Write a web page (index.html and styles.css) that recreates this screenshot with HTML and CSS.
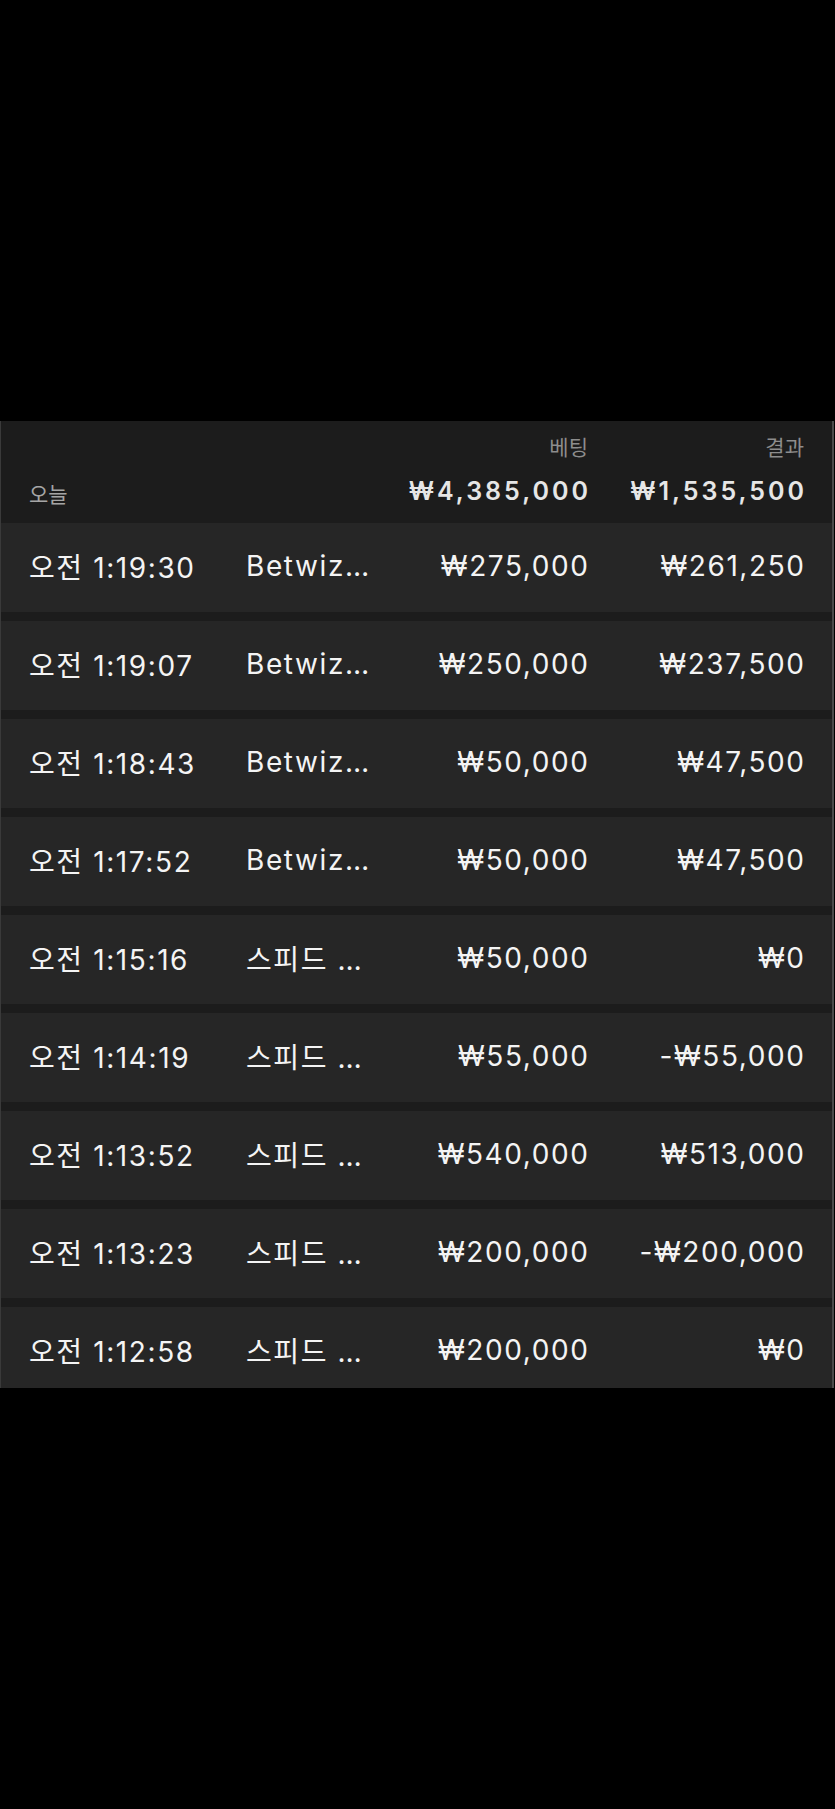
FILE: index.html
```html
<!DOCTYPE html>
<html lang="ko">
<head>
<meta charset="utf-8">
<link rel="stylesheet" href="styles.css">
</head>
<body>
<div class="top-space"></div>
<section class="panel">
  <div class="head">
    <div class="h-label h-bet">베팅</div>
    <div class="h-label h-res">결과</div>
    <div class="h-today">오늘</div>
    <div class="h-total h-bet-total">₩4,385,000</div>
    <div class="h-total h-res-total">₩1,535,500</div>
  </div>
  <div class="rows">
    <div class="row"><span class="c-time">오전 1:19:30</span><span class="c-game">Betwiz…</span><span class="c-num">₩275,000</span><span class="c-num">₩261,250</span></div>
    <div class="row"><span class="c-time">오전 1:19:07</span><span class="c-game">Betwiz…</span><span class="c-num">₩250,000</span><span class="c-num">₩237,500</span></div>
    <div class="row"><span class="c-time">오전 1:18:43</span><span class="c-game">Betwiz…</span><span class="c-num">₩50,000</span><span class="c-num">₩47,500</span></div>
    <div class="row"><span class="c-time">오전 1:17:52</span><span class="c-game">Betwiz…</span><span class="c-num">₩50,000</span><span class="c-num">₩47,500</span></div>
    <div class="row"><span class="c-time">오전 1:15:16</span><span class="c-game">스피드 …</span><span class="c-num">₩50,000</span><span class="c-num">₩0</span></div>
    <div class="row"><span class="c-time">오전 1:14:19</span><span class="c-game">스피드 …</span><span class="c-num">₩55,000</span><span class="c-num">-₩55,000</span></div>
    <div class="row"><span class="c-time">오전 1:13:52</span><span class="c-game">스피드 …</span><span class="c-num">₩540,000</span><span class="c-num">₩513,000</span></div>
    <div class="row"><span class="c-time">오전 1:13:23</span><span class="c-game">스피드 …</span><span class="c-num">₩200,000</span><span class="c-num">-₩200,000</span></div>
    <div class="row"><span class="c-time">오전 1:12:58</span><span class="c-game">스피드 …</span><span class="c-num">₩200,000</span><span class="c-num">₩0</span></div>
  </div>
</section>
</body>
</html>
```
FILE: styles.css
```css
html, body {
  margin: 0;
  padding: 0;
  background: #000;
}
body {
  width: 835px;
  height: 1809px;
  font-family: Inter, "Noto Sans CJK KR", sans-serif;
  color: #f2f2f2;
  overflow: hidden;
}
.top-space {
  height: 421px;
}
.panel {
  width: 834px;
  height: 967px;
  box-sizing: border-box;
  border-left: 1px solid #3a3a3a;
  border-right: 2px solid #4a4a4a;
  background: #1c1c1c;
  overflow: hidden;
}
.head {
  height: 102px;
  box-sizing: border-box;
  padding: 15px 28px 0 28px;
  display: grid;
  grid-template-columns: 216px 1fr 1fr 216px;
  grid-template-rows: 24px 32px;
  row-gap: 15px;
}
.h-label {
  font-size: 21px;
  line-height: 24px;
  color: #8d8d8d;
  text-align: right;
}
.h-bet { grid-column: 3; grid-row: 1; }
.h-res { grid-column: 4; grid-row: 1; }
.h-today {
  grid-column: 1;
  grid-row: 2;
  font-size: 21px;
  line-height: 24px;
  color: #a5a5a5;
  align-self: end;
}
.h-total {
  font-size: 25px;
  line-height: 32px;
  font-weight: 600;
  letter-spacing: 3px;
  color: #e6e6e6;
  text-align: right;
  margin-right: -3px;
}
.h-bet-total { grid-column: 3; grid-row: 2; }
.h-res-total { grid-column: 4; grid-row: 2; }
.rows {
  display: flex;
  flex-direction: column;
  gap: 9px;
}
.row {
  flex: none;
  height: 89px;
  box-sizing: border-box;
  padding: 0 28px 3px 28px;
  background: #262626;
  display: grid;
  grid-template-columns: 216px 1fr 1fr 216px;
  align-items: center;
  font-size: 28px;
  letter-spacing: 1.6px;
  color: #f4f4f4;
  white-space: nowrap;
}
.c-game {
  padding-left: 1px;
}
.c-num {
  text-align: right;
  margin-right: -1.6px;
}
```
